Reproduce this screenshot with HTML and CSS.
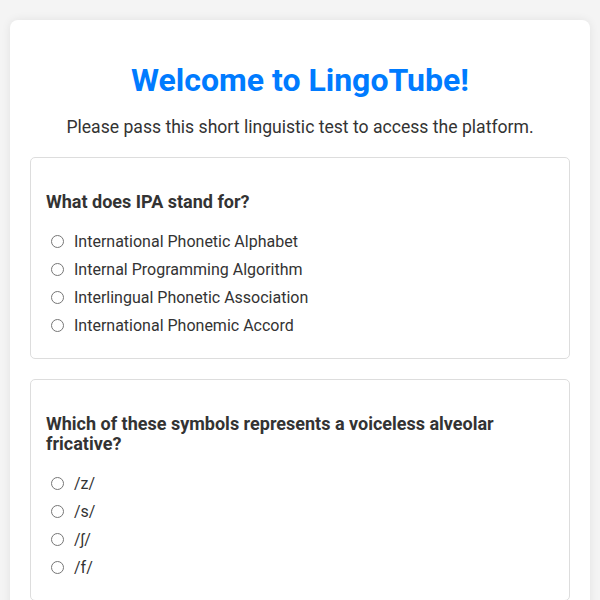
FILE: index.html
```html
<!DOCTYPE html>
<html lang="en">
<head>
  <meta charset="UTF-8">
  <meta name="viewport" content="width=device-width, initial-scale=1.0">
  <title>LingoTube</title>
  <link rel="stylesheet" href="styles.css">
</head>
<body>
  <div class="container">
    <h1>Welcome to LingoTube!</h1>
    <p class="intro">Please pass this short linguistic test to access the platform.</p>

    <!-- Question 1 -->
    <div class="question">
      <h3>What does IPA stand for?</h3>
      <label class="option"><input type="radio" name="q1" value="a">International Phonetic Alphabet</label>
      <label class="option"><input type="radio" name="q1" value="b">Internal Programming Algorithm</label>
      <label class="option"><input type="radio" name="q1" value="c">Interlingual Phonetic Association</label>
      <label class="option"><input type="radio" name="q1" value="d">International Phonemic Accord</label>
    </div>

    <!-- Question 2 -->
    <div class="question">
      <h3>Which of these symbols represents a voiceless alveolar fricative?</h3>
      <label class="option"><input type="radio" name="q2" value="a">/z/</label>
      <label class="option"><input type="radio" name="q2" value="b">/s/</label>
      <label class="option"><input type="radio" name="q2" value="c">/ʃ/</label>
      <label class="option"><input type="radio" name="q2" value="d">/f/</label>
    </div>
  </div>
</body>
</html>
```

FILE: styles.css
```css
* { box-sizing: border-box; }
body {
  margin: 0;
  padding: 20px 10px;
  background: #f4f4f4;
  color: #333;
  font-family: Roboto, 'Liberation Sans', sans-serif;
}

.container {
  background: #fff;
  border-radius: 8px;
  box-shadow: 0 0 10px rgba(0,0,0,0.08);
  padding: 41px 20px 20px;
}

h1 {
  margin: 0 0 18px;
  text-align: center;
  color: #007bff;
  font-size: 32px;
  font-weight: bold;
}

.intro {
  margin: 0 0 19px;
  text-align: center;
  font-size: 17.6px;
  line-height: 21px;
}

.question {
  border: 1px solid #ddd;
  border-radius: 5px;
  padding: 15px;
  margin-bottom: 20px;
}
.question h3 {
  margin: 19px 0 19px;
  font-size: 18px;
  line-height: 20px;
}

.option {
  display: flex;
  align-items: center;
  height: 20px;
  margin-bottom: 8px;
  font-size: 16px;
}
.option input {
  width: 13px;
  height: 13px;
  margin: 0 10px 0 5px;
}
```
